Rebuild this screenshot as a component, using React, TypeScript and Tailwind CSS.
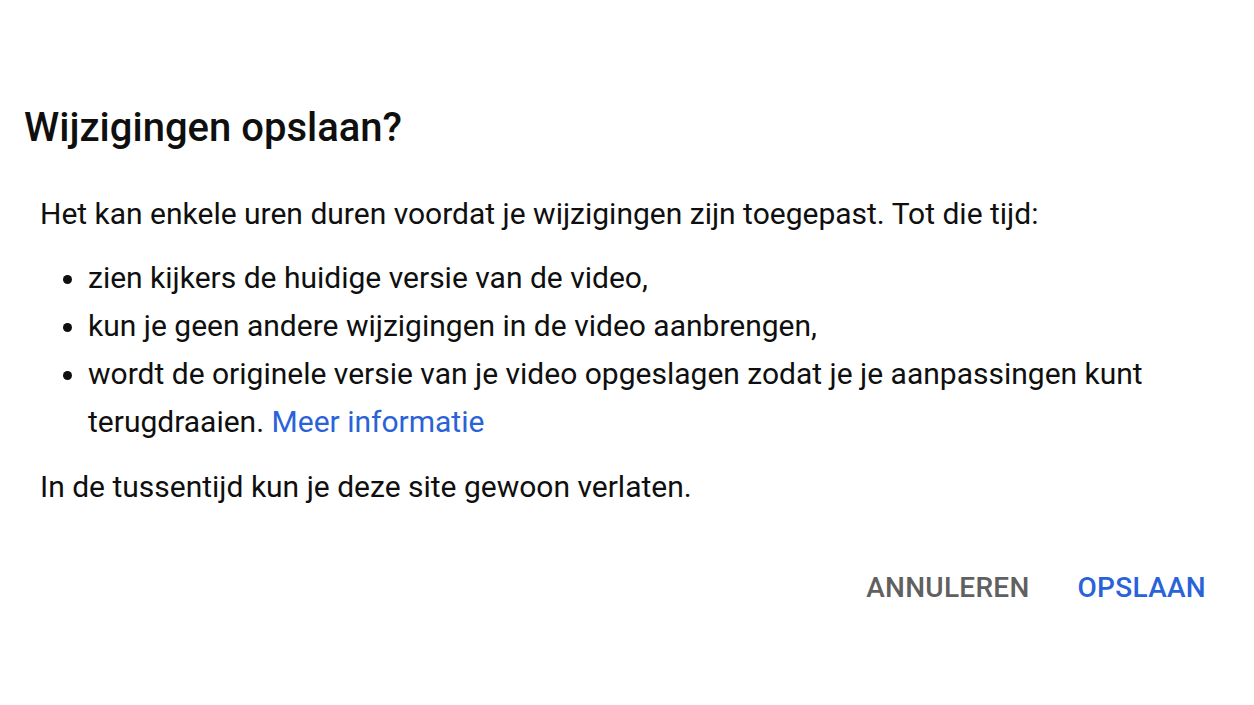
import React from 'react';

const App = () => {
  const items = [
    'zien kijkers de huidige versie van de video,',
    'kun je geen andere wijzigingen in de video aanbrengen,',
  ];

  return (
    <div className="w-[1254px] h-[705px] bg-white text-[#0f0f0f] font-['Roboto',sans-serif]">
      <div className="pt-[101px] pl-[24px] pr-[48px]">
        {/* Title */}
        <h1 className="text-[40px] leading-[54px] font-medium">Wijzigingen opslaan?</h1>

        {/* Body */}
        <div className="pl-[16px] pt-[35px] text-[30px] leading-[48px]">
          <p>Het kan enkele uren duren voordat je wijzigingen zijn toegepast. Tot die tijd:</p>
          <ul className="list-disc pl-[48px] mt-[16px]">
            {items.map((t) => (
              <li key={t}>{t}</li>
            ))}
            <li>
              wordt de originele versie van je video opgeslagen zodat je je aanpassingen kunt terugdraaien.{' '}
              <a className="text-[#2a62d8]">Meer informatie</a>
            </li>
          </ul>
          <p className="mt-[17px]">In de tussentijd kun je deze site gewoon verlaten.</p>
        </div>

        {/* Actions */}
        <div className="flex justify-end gap-[48px] mt-[57px] text-[28px] leading-[40px] font-medium">
          <button className="uppercase tracking-[0.01em] text-[#606060]">Annuleren</button>
          <button className="uppercase tracking-[0.01em] text-[#2a62d8]">Opslaan</button>
        </div>
      </div>
    </div>
  );
};

export default App;
